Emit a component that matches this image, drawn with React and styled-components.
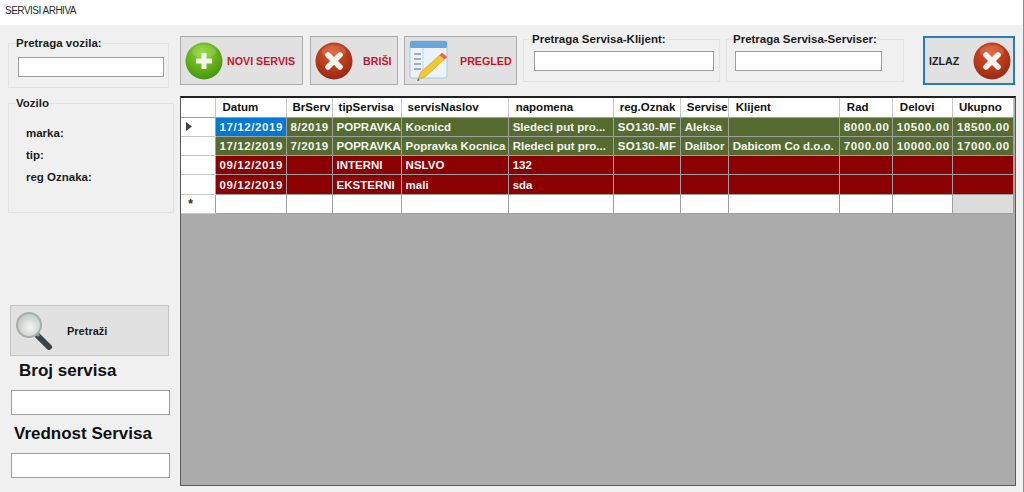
import React from 'react'
import styled, { createGlobalStyle } from 'styled-components'

const GlobalStyle = createGlobalStyle`
    html, body {
        margin: 0;
        padding: 0;
        height: 100%;
        overflow: hidden;
        background: #f0f0f0;
        font-family: "Liberation Sans", Arial, sans-serif;
    }
`

const Window = styled.div`
    width: 1024px;
    height: 492px;
    box-sizing: border-box;
    border-right: 1px solid #8c8c8c;
    background: #f0f0f0;
    overflow: hidden;
`

const TitleBar = styled.div`
    height: 25px;
    box-sizing: border-box;
    padding: 5px 0 0 5px;
    background: #fff;
    color: #2b2b2b;
    font-size: 10px;
    line-height: 12px;
    letter-spacing: -0.5px;
`

const Body = styled.div`
    display: grid;
    grid-template-columns: 180px 1fr;
    height: 467px;
`

const Sidebar = styled.aside`
    display: flex;
    flex-direction: column;
    padding: 12px 0 0 8px;
    box-sizing: border-box;
`

const Group = styled.fieldset`
    box-sizing: border-box;
    margin: ${(p) => p.$margin || '0'};
    padding: ${(p) => p.$padding || '0'};
    width: ${(p) => p.$width}px;
    height: ${(p) => p.$height}px;
    border: 1px solid #e2e2e2;
    min-width: 0;
    flex: none;
`

const Legend = styled.legend`
    padding: 0;
    margin-left: ${(p) => p.$left || 7}px;
    font-size: 11.5px;
    line-height: 13px;
    font-weight: 700;
    color: #1c1c1c;
`

const TextInput = styled.input`
    display: block;
    box-sizing: border-box;
    width: ${(p) => p.$width}px;
    height: ${(p) => p.$height || 20}px;
    margin: ${(p) => p.$margin || '0'};
    padding: 0;
    background: #fff;
    border: 1px solid #9d9d9d;
    border-radius: 0;
    outline: none;
`

const InfoRow = styled.div`
    margin-left: 17px;
    height: 22px;
    font-size: 11.5px;
    line-height: 22px;
    font-weight: 700;
    color: #1c1c1c;
`

const BigLabel = styled.div`
    margin: ${(p) => p.$margin};
    height: 20px;
    font-size: 17px;
    line-height: 20px;
    font-weight: 700;
    color: #111;
`

const SearchButton = styled.button`
    display: flex;
    align-items: center;
    box-sizing: border-box;
    width: 159px;
    height: 51px;
    margin: 92px 0 0 2px;
    padding: 0 0 0 4px;
    flex: none;
    background: #e1e1e1;
    border: 1px solid #c4c4c4;
    font-family: inherit;
    font-size: 11px;
    font-weight: 700;
    color: #1c1c1c;
    span {
        margin-left: 14px;
    }
`

const Main = styled.main`
    display: flex;
    flex-direction: column;
    padding-right: 7px;
`

const Toolbar = styled.div`
    display: flex;
    align-items: flex-start;
    height: 71px;
    padding-top: 11px;
    box-sizing: border-box;
`

const ActionButton = styled.button`
    display: flex;
    align-items: center;
    flex: none;
    box-sizing: border-box;
    width: ${(p) => p.$width}px;
    height: 49px;
    margin-left: ${(p) => p.$gap || 0}px;
    padding: 0 0 0 4px;
    background: #e1e1e1;
    border: ${(p) => (p.$focused ? '2px solid #2b7cbd' : '1px solid #adadad')};
    font-family: inherit;
    font-size: 10.7px;
    font-weight: 700;
    color: ${(p) => (p.$focused ? '#222' : '#c2182b')};
    white-space: nowrap;
`

const ButtonText = styled.span`
    margin-left: ${(p) => p.$left || 0}px;
    margin-right: ${(p) => p.$right || 0}px;
`

const GridWrap = styled.div`
    box-sizing: border-box;
    width: 836px;
    height: 390px;
    background: #ababab;
    border: 1px solid #5a5a5a;
    border-top: 2px solid #222;
    overflow: hidden;
`

const Table = styled.table`
    border-collapse: collapse;
    table-layout: fixed;
    width: 833px;
    font-size: 11.5px;
`

const HeadCell = styled.th`
    height: 19px;
    padding: 0 0 0 ${(p) => p.$pad ?? 7}px;
    box-sizing: border-box;
    background: #fff;
    color: #111;
    font-weight: 700;
    text-align: left;
    overflow: hidden;
    white-space: nowrap;
    border-right: 1px solid #c8c8c8;
    border-bottom: 1px solid #a0a0a0;
`

const RowHead = styled.td`
    height: 19.33px;
    padding: 0 0 0 ${(p) => (p.$star ? 7 : 5)}px;
    box-sizing: border-box;
    background: #fff;
    color: #333;
    text-align: left;
    border-right: 1px solid #a0a0a0;
    border-bottom: 1px solid #c8c8c8;
    font-size: 13px;
    font-weight: 700;
    line-height: 10px;
    svg {
        display: block;
    }
`

const rowColors = { ok: '#556b2f', open: '#8b0000', empty: '#fff' }

const Cell = styled.td`
    height: 19.33px;
    padding: 0 0 0 4px;
    box-sizing: border-box;
    background: ${(p) => (p.$selected ? '#0078d7' : p.$blank ? '#dcdcdc' : rowColors[p.$kind])};
    color: #f4f4f4;
    font-weight: 700;
    letter-spacing: ${(p) => p.$spacing || 0}px;
    white-space: nowrap;
    overflow: hidden;
    border-right: 1px solid #a0a0a0;
    border-bottom: 1px solid #a0a0a0;
`

const columns = [
    { label: '', width: 34 },
    { label: 'Datum', width: 71, spacing: 0.6 },
    { label: 'BrServ', width: 46, pad: 6, spacing: 0.5 },
    { label: 'tipServisa', width: 69, pad: 6 },
    { label: 'servisNaslov', width: 107, pad: 6 },
    { label: 'napomena', width: 105 },
    { label: 'reg.Oznak', width: 67, pad: 6, spacing: 0.3 },
    { label: 'Servise', width: 48, pad: 6 },
    { label: 'Klijent', width: 111 },
    { label: 'Rad', width: 53, spacing: 0.6 },
    { label: 'Delovi', width: 60, spacing: 0.6 },
    { label: 'Ukupno', width: 61, pad: 6, spacing: 0.6 },
]

const rows = [
    {
        kind: 'ok',
        current: true,
        cells: ['17/12/2019', '8/2019', 'POPRAVKA', 'Kocnicd', 'Sledeci put pro...', 'SO130-MF', 'Aleksa', '', '8000.00', '10500.00', '18500.00'],
    },
    {
        kind: 'ok',
        cells: ['17/12/2019', '7/2019', 'POPRAVKA', 'Popravka Kocnica', 'Rledeci put pro...', 'SO130-MF', 'Dalibor', 'Dabicom Co d.o.o.', '7000.00', '10000.00', '17000.00'],
    },
    {
        kind: 'open',
        cells: ['09/12/2019', '', 'INTERNI', 'NSLVO', '132', '', '', '', '', '', ''],
    },
    {
        kind: 'open',
        cells: ['09/12/2019', '', 'EKSTERNI', 'mali', 'sda', '', '', '', '', '', ''],
    },
]

function RoundIcon({ id, light, dark, size = 38, plus }) {
    return (
        <svg width={size} height={size} viewBox="0 0 38 38" style={{ flex: 'none' }}>
            <defs>
                <radialGradient id={id} cx="45%" cy="30%" r="75%">
                    <stop offset="0%" stopColor={light} />
                    <stop offset="100%" stopColor={dark} />
                </radialGradient>
            </defs>
            <circle cx="19" cy="19" r="18.5" fill={`url(#${id})`} />
            <ellipse cx="19" cy="9.5" rx="12" ry="6.5" fill="#fff" opacity="0.14" />
            {plus ? (
                <path d="M16.5 11h5v5.5H27v5h-5.500V27h-5v-5.500H11v-5h5.500z" fill="#f2f7ea" />
            ) : (
                <path
                    d="M13 13l12 12M25 13L13 25"
                    stroke="#fbf3ee"
                    strokeWidth="5.500"
                    strokeLinecap="round"
                />
            )}
        </svg>
    )
}

function NotesIcon() {
    return (
        <svg width="40" height="41" viewBox="0 0 40 41" style={{ flex: 'none' }}>
            <rect x="1" y="1" width="37" height="37" rx="2" fill="#eaf3fb" stroke="#a9c8e2" />
            <rect x="1" y="1" width="37" height="7" rx="1.500" fill="#69a5d8" />
            <path d="M14 8v30" stroke="#c2d8ea" />
            <path d="M5 14h7M5 19h7M5 24h7M5 29h7" stroke="#8d969e" strokeWidth="1.500" />
            <path d="M36 15l5 4-22 20-7 2 3-7z" transform="translate(-3 -2)" fill="#f2c832" stroke="#c99a1a" strokeWidth="0.600" />
            <path d="M33 13l5 4-2.500 2.300-5-4z" fill="#e0635c" />
            <path d="M9 39l-1 2 3-1z" fill="#444" />
        </svg>
    )
}

function MagnifierIcon() {
    return (
        <svg width="38" height="40" viewBox="0 0 38 40" style={{ flex: 'none' }}>
            <defs>
                <radialGradient id="lens" cx="55%" cy="60%" r="65%">
                    <stop offset="0%" stopColor="#f4f6f4" />
                    <stop offset="100%" stopColor="#b9c4bf" />
                </radialGradient>
            </defs>
            <path d="M23 25l11 11" stroke="#3d4346" strokeWidth="6" strokeLinecap="round" />
            <path d="M21 22l3 3" stroke="#8e9496" strokeWidth="3" />
            <circle cx="14" cy="14" r="12" fill="url(#lens)" stroke="#a6aeab" strokeWidth="2" />
        </svg>
    )
}

function RowMarker() {
    return (
        <svg width="6" height="9" viewBox="0 0 6 9">
            <path d="M0 0l6 4.500L0 9z" fill="#444" />
        </svg>
    )
}

export default function App() {
    return (
        <>
            <GlobalStyle />
            <Window>
                <TitleBar>SERVISI ARHIVA</TitleBar>
                <Body>
                    <Sidebar>
                        <Group $width={161} $height={51} $padding="7px 0 0 0">
                            <Legend>Pretraga vozila:</Legend>
                            <TextInput $width={146} $margin="0 0 0 9px" />
                        </Group>
                        <Group $width={166} $height={116} $margin="9px 0 0 0" $padding="12px 0 0 0">
                            <Legend>Vozilo</Legend>
                            <InfoRow>marka:</InfoRow>
                            <InfoRow>tip:</InfoRow>
                            <InfoRow>reg Oznaka:</InfoRow>
                        </Group>
                        <SearchButton>
                            <MagnifierIcon />
                            <span>Pretraži</span>
                        </SearchButton>
                        <BigLabel $margin="5px 0 0 11px">Broj servisa</BigLabel>
                        <TextInput $width={159} $height={25} $margin="9px 0 0 3px" />
                        <BigLabel $margin="9px 0 0 6px">Vrednost Servisa</BigLabel>
                        <TextInput $width={159} $height={25} $margin="9px 0 0 3px" />
                    </Sidebar>
                    <Main>
                        <Toolbar>
                            <ActionButton $width={123}>
                                <RoundIcon id="plusBall" light="#92d82e" dark="#3f8f0c" plus />
                                <ButtonText $left={4}>NOVI SERVIS</ButtonText>
                            </ActionButton>
                            <ActionButton $width={88} $gap={7}>
                                <RoundIcon id="delBall" light="#dd5526" dark="#942512" />
                                <ButtonText $left={10}>BRIŠI</ButtonText>
                            </ActionButton>
                            <ActionButton $width={113} $gap={6}>
                                <NotesIcon />
                                <ButtonText $left={11}>PREGLED</ButtonText>
                            </ActionButton>
                            <Group $width={197} $height={49} $margin="-3px 0 0 6px" $padding="5px 0 0 0">
                                <Legend $left={8}>Pretraga Servisa-Klijent:</Legend>
                                <TextInput $width={180} $margin="0 0 0 10px" />
                            </Group>
                            <Group $width={178} $height={49} $margin="-3px 0 0 6px" $padding="5px 0 0 0">
                                <Legend $left={6}>Pretraga Servisa-Serviser:</Legend>
                                <TextInput $width={147} $margin="0 0 0 8px" />
                            </Group>
                            <ActionButton $width={92} $gap={19} $focused>
                                <ButtonText $right={14}>IZLAZ</ButtonText>
                                <RoundIcon id="exitBall" light="#dd5526" dark="#942512" />
                            </ActionButton>
                        </Toolbar>
                        <GridWrap>
                            <Table>
                                <colgroup>
                                    {columns.map((c, i) => (
                                        <col key={i} style={{ width: c.width }} />
                                    ))}
                                </colgroup>
                                <thead>
                                    <tr>
                                        {columns.map((c, i) => (
                                            <HeadCell key={i} $pad={c.pad}>
                                                {c.label}
                                            </HeadCell>
                                        ))}
                                    </tr>
                                </thead>
                                <tbody>
                                    {rows.map((row, r) => (
                                        <tr key={r}>
                                            <RowHead>{row.current ? <RowMarker /> : ''}</RowHead>
                                            {row.cells.map((text, i) => (
                                                <Cell
                                                    key={i}
                                                    $kind={row.kind}
                                                    $spacing={columns[i + 1].spacing}
                                                    $selected={row.current && i === 0}
                                                >
                                                    {text}
                                                </Cell>
                                            ))}
                                        </tr>
                                    ))}
                                    <tr>
                                        <RowHead $star>*</RowHead>
                                        {columns.slice(1).map((c, i) => (
                                            <Cell key={i} $kind="empty" $blank={i === 10} />
                                        ))}
                                    </tr>
                                </tbody>
                            </Table>
                        </GridWrap>
                    </Main>
                </Body>
            </Window>
        </>
    )
}
